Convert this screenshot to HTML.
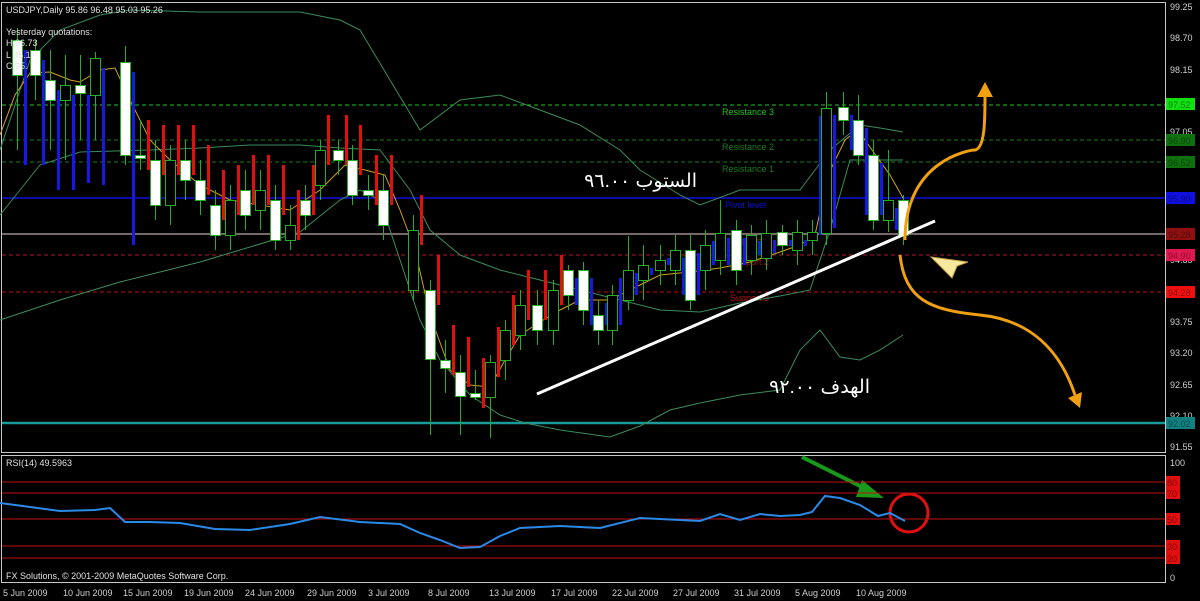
<!DOCTYPE html>
<html><head><meta charset="utf-8"><style>
html,body{margin:0;padding:0;background:#000;width:1200px;height:601px;overflow:hidden}
svg{display:block}
text{font-family:"Liberation Sans","DejaVu Sans",sans-serif}
</style></head><body>
<svg id="s" width="1200" height="601" viewBox="0 0 1200 601" xmlns="http://www.w3.org/2000/svg">
<rect width="1200" height="601" fill="#000"/>
<rect x="1.5" y="2.5" width="1164" height="450" fill="none" stroke="#c8c8c8" stroke-width="1"/>
<rect x="1.5" y="455.5" width="1164" height="127" fill="none" stroke="#c8c8c8" stroke-width="1"/>
<line x1="2" y1="105" x2="1165" y2="105" stroke="#22c322" stroke-dasharray="4,3"/>
<line x1="2" y1="140" x2="1165" y2="140" stroke="#1c7a1c" stroke-dasharray="4,3"/>
<line x1="2" y1="162" x2="1165" y2="162" stroke="#1c7a1c" stroke-dasharray="4,3"/>
<line x1="2" y1="198" x2="1165" y2="198" stroke="#1010d8" stroke-width="1.5"/>
<line x1="2" y1="234" x2="1165" y2="234" stroke="#a08c8c" stroke-width="1.5"/>
<line x1="2" y1="255" x2="1165" y2="255" stroke="#b01a2a" stroke-dasharray="4,3"/>
<line x1="2" y1="292" x2="1165" y2="292" stroke="#c01010" stroke-dasharray="4,3"/>
<line x1="2" y1="423" x2="1165" y2="423" stroke="#1a9a9a" stroke-width="2.5"/>
<text x="722" y="115" font-size="9" fill="#22c322">Resistance 3</text>
<text x="722" y="150" font-size="9" fill="#1c7a1c">Resistance 2</text>
<text x="722" y="172" font-size="9" fill="#1c7a1c">Resistance 1</text>
<text x="725" y="208" font-size="9" fill="#1010d8">Pivot level</text>
<text x="730" y="244" font-size="9" fill="#a01818">Support 1</text>
<text x="730" y="265" font-size="9" fill="#a01818">Support 2</text>
<text x="730" y="301" font-size="9" fill="#c01010">Support 3</text>
<polyline fill="none" stroke="#3c8c5c" stroke-width="1" points="0,150 30,60 60,30 100,15 130,10 200,12 300,12 340,20 360,30 390,80 420,130 460,100 500,95 540,110 580,125 620,150 640,170 680,195 700,205 740,190 800,190 815,170 830,150 860,125 880,128 903,132"/>
<polyline fill="none" stroke="#3c8c5c" stroke-width="1" points="0,320 30,310 60,300 120,282 200,262 300,232 340,200 360,190 380,200 400,260 420,320 440,360 470,395 500,415 525,423 560,430 610,437 640,426 670,410 700,403 740,395 780,390 800,350 820,330 840,357 860,360 880,350 903,335"/>
<polyline fill="none" stroke="#3c8c5c" stroke-width="1" points="0,215 20,190 40,165 80,152 150,150 200,148 250,145 300,145 340,148 380,150 410,190 430,230 460,255 500,270 540,280 580,290 620,300 660,310 700,312 740,303 780,296 810,290 830,230 850,160 870,160 890,160 903,160"/>
<polyline fill="none" stroke="#d4a020" stroke-width="1" points="0,135 15,95 30,73 50,72 70,80 80,82 100,70 115,68 130,100 150,140 170,160 200,185 230,200 260,205 290,210 320,190 345,165 365,170 385,175 400,210 415,250 430,315 450,370 470,385 490,387 505,360 520,335 540,322 560,310 580,300 610,300 640,285 660,275 690,272 720,268 750,262 780,252 800,245 815,235 828,175 845,140 858,130 872,150 890,175 903,198"/>
<g id="c"></g>
<line x1="537" y1="394" x2="935" y2="221" stroke="#fff" stroke-width="3"/>
<path d="M905,240 C905,160 970,150 975,150 C985,148 985,120 985,95" fill="none" stroke="#f0a010" stroke-width="3"/>
<path d="M977,97 L985,82 L993,97 Z" fill="#f0a010"/>
<path d="M900,255 C905,300 930,310 980,315 C1030,320 1060,350 1075,395" fill="none" stroke="#f0a010" stroke-width="3"/>
<path d="M1068,398 L1080,408 L1082,392 Z" fill="#f0a010"/>
<path d="M931,257 L968,262 L957,266 L952,278 Z" fill="#f7e8a0" stroke="#c8a040"/>
<line x1="802" y1="457" x2="868" y2="490" stroke="#1a9a1a" stroke-width="4"/>
<path d="M862,480 L884,498 L856,497 Z" fill="#1a9a1a"/>
<circle cx="909" cy="513" r="19" fill="none" stroke="#e01010" stroke-width="3"/>
<text x="697" y="187" font-size="19" fill="#fff" text-anchor="end" font-family="'DejaVu Sans',sans-serif">الستوب ٩٦.٠٠</text>
<text x="870" y="393" font-size="19" fill="#fff" text-anchor="end" font-family="'DejaVu Sans',sans-serif">الهدف ٩٢.٠٠</text>
<text x="6" y="13" font-size="9" fill="#e0e0e0">USDJPY,Daily  95.86 96.48 95.03 95.26</text>
<text x="6" y="35" font-size="9" fill="#e0e0e0">Yesterday quotations:</text>
<text x="6" y="46" font-size="9" fill="#e0e0e0">H 96.73</text>
<text x="6" y="58" font-size="9" fill="#e0e0e0">L 95.1</text>
<text x="6" y="69" font-size="9" fill="#e0e0e0">C 95.</text>
<line x1="2" y1="482" x2="1165" y2="482" stroke="#c01010"/>
<line x1="2" y1="493" x2="1165" y2="493" stroke="#c01010"/>
<line x1="2" y1="519" x2="1165" y2="519" stroke="#c01010"/>
<line x1="2" y1="546" x2="1165" y2="546" stroke="#c01010"/>
<line x1="2" y1="558" x2="1165" y2="558" stroke="#c01010"/>
<polyline fill="none" stroke="#2a8ae8" stroke-width="2" points="0,503 30,507 60,511 95,510 110,508 125,522 150,522 180,523 215,529 250,530 290,524 320,517 360,522 400,524 420,533 440,540 460,548 480,547 500,536 520,528 560,526 600,528 640,518 680,520 700,521 720,514 740,520 760,514 780,516 800,515 812,512 825,496 840,498 860,505 878,516 890,513 905,521"/>
<text x="6" y="466" font-size="9" fill="#e0e0e0">RSI(14) 49.5963</text>
<text x="6" y="579" font-size="9" fill="#e0e0e0">FX Solutions, © 2001-2009 MetaQuotes Software Corp.</text>
<g font-size="9" fill="#d0d0d0">
<text x="1170" y="10">99.25</text><text x="1170" y="41">98.70</text><text x="1170" y="73">98.15</text><text x="1170" y="135">97.05</text><text x="1170" y="202">95.93</text><text x="1170" y="263">94.85</text><text x="1170" y="325">93.75</text><text x="1170" y="356">93.20</text><text x="1170" y="388">92.65</text><text x="1170" y="419">92.10</text><text x="1170" y="450">91.55</text>
<text x="1170" y="466">100</text><text x="1170" y="581">0</text>
</g>
<g font-size="9">
<rect x="1166" y="98" width="29" height="12" fill="#10e010"/><text x="1168" y="108" fill="#108010">97.52</text>
<rect x="1166" y="134" width="29" height="12" fill="#107010"/><text x="1168" y="144" fill="#0c4a0c">96.90</text>
<rect x="1166" y="156" width="29" height="12" fill="#107010"/><text x="1168" y="166" fill="#0c4a0c">96.52</text>
<rect x="1166" y="192" width="29" height="12" fill="#1010e0"/><text x="1168" y="202" fill="#0a0a80">95.90</text>
<rect x="1166" y="228" width="29" height="12" fill="#901010"/><text x="1168" y="238" fill="#501010">95.28</text>
<rect x="1166" y="249" width="29" height="12" fill="#e01850"/><text x="1168" y="259" fill="#901030">94.90</text>
<rect x="1166" y="286" width="29" height="12" fill="#f01010"/><text x="1168" y="296" fill="#901010">94.28</text>
<rect x="1166" y="417" width="29" height="12" fill="#108080"/><text x="1168" y="427" fill="#0a4a4a">92.02</text>
<rect x="1166" y="476" width="14" height="12" fill="#e01010"/><text x="1167" y="486" fill="#800">80</text>
<rect x="1166" y="487" width="14" height="12" fill="#e01010"/><text x="1167" y="497" fill="#800">70</text>
<rect x="1166" y="513" width="14" height="12" fill="#e01010"/><text x="1167" y="523" fill="#800">50</text>
<rect x="1166" y="540" width="14" height="12" fill="#e01010"/><text x="1167" y="550" fill="#800">30</text>
<rect x="1166" y="552" width="14" height="12" fill="#e01010"/><text x="1167" y="562" fill="#800">20</text>
</g>
<g font-size="9" fill="#d0d0d0">
<text x="3" y="596">5 Jun 2009</text><text x="63" y="596">10 Jun 2009</text><text x="123" y="596">15 Jun 2009</text><text x="184" y="596">19 Jun 2009</text><text x="245" y="596">24 Jun 2009</text><text x="307" y="596">29 Jun 2009</text><text x="368" y="596">3 Jul 2009</text><text x="428" y="596">8 Jul 2009</text><text x="489" y="596">13 Jul 2009</text><text x="551" y="596">17 Jul 2009</text><text x="612" y="596">22 Jul 2009</text><text x="673" y="596">27 Jul 2009</text><text x="734" y="596">31 Jul 2009</text><text x="795" y="596">5 Aug 2009</text><text x="856" y="596">10 Aug 2009</text>
</g>
</svg>
<script>
var d=[[17,40,75,1,28,150],[35,50,75,1,40,100],[50,80,100,1,50,150],[65,85,100,0,55,160],[80,85,93,1,55,140],[95,58,95,0,52,140],[125,62,155,1,46,165],[140,155,158,1,120,170],[155,160,205,1,140,220],[170,160,205,0,145,225],[185,160,180,1,140,200],[200,180,200,1,160,215],[215,205,235,1,190,250],[230,200,235,0,185,250],[245,190,215,1,170,230],[260,190,210,0,170,230],[275,200,240,1,185,250],[290,225,240,0,205,250],[305,200,215,1,185,230],[320,150,185,0,140,200],[338,150,160,1,140,175],[352,160,195,1,145,205],[368,190,195,1,175,210],[383,190,225,1,175,240],[413,230,290,0,215,300],[430,290,359,1,280,435],[445,360,368,1,340,393],[460,372,396,1,355,435],[475,393,397,1,370,400],[490,362,397,0,355,438],[505,330,360,0,320,380],[520,305,335,0,290,350],[537,305,330,1,290,345],[553,290,330,0,280,345],[568,270,295,1,265,310],[583,270,310,1,262,325],[598,315,330,1,300,345],[612,295,330,0,285,345],[628,270,300,0,236,310],[643,265,280,0,245,300],[660,260,270,0,245,285],[675,250,270,0,235,285],[690,250,300,1,235,310],[705,245,270,0,230,290],[720,233,260,0,200,275],[736,230,270,1,220,285],[751,235,260,0,225,275],[766,233,258,0,220,270],[782,232,245,1,225,255],[797,232,250,0,220,265],[812,232,240,0,220,255],[826,108,233,0,92,245],[843,107,120,1,92,135],[858,120,155,1,95,165],[873,155,220,1,140,230],[888,200,220,0,150,232],[903,200,235,1,195,245]];
var g=document.getElementById('c'),h='';
d.forEach(function(c,i){
 var x=c[0];
 var col=(x<130||x>560)?'#1818e0':'#e01010';
 if(i<d.length-1){var bt=Math.min(c[1],d[i+1][1])+8,bb=Math.max(c[2],d[i+1][2])-5;if(x>=130&&x<560){bt=c[1]-35;bb=c[1]+15;}if(x<130){bt=c[1]+10;bb=c[2]+90;}
 h+='<rect x="'+(x+7)+'" y="'+bt+'" width="3" height="'+Math.max(6,bb-bt)+'" fill="'+col+'"/>';}
 h+='<line x1="'+(x+.5)+'" y1="'+c[4]+'" x2="'+(x+.5)+'" y2="'+c[5]+'" stroke="#22b022"/>';
 h+='<rect x="'+(x-4.5)+'" y="'+c[1]+'.5" width="10" height="'+Math.max(3,c[2]-c[1])+'" fill="'+(c[3]?'#fff':'#000')+'" stroke="#22b022"/>';
});
g.innerHTML=h;
</script>
</body></html>
